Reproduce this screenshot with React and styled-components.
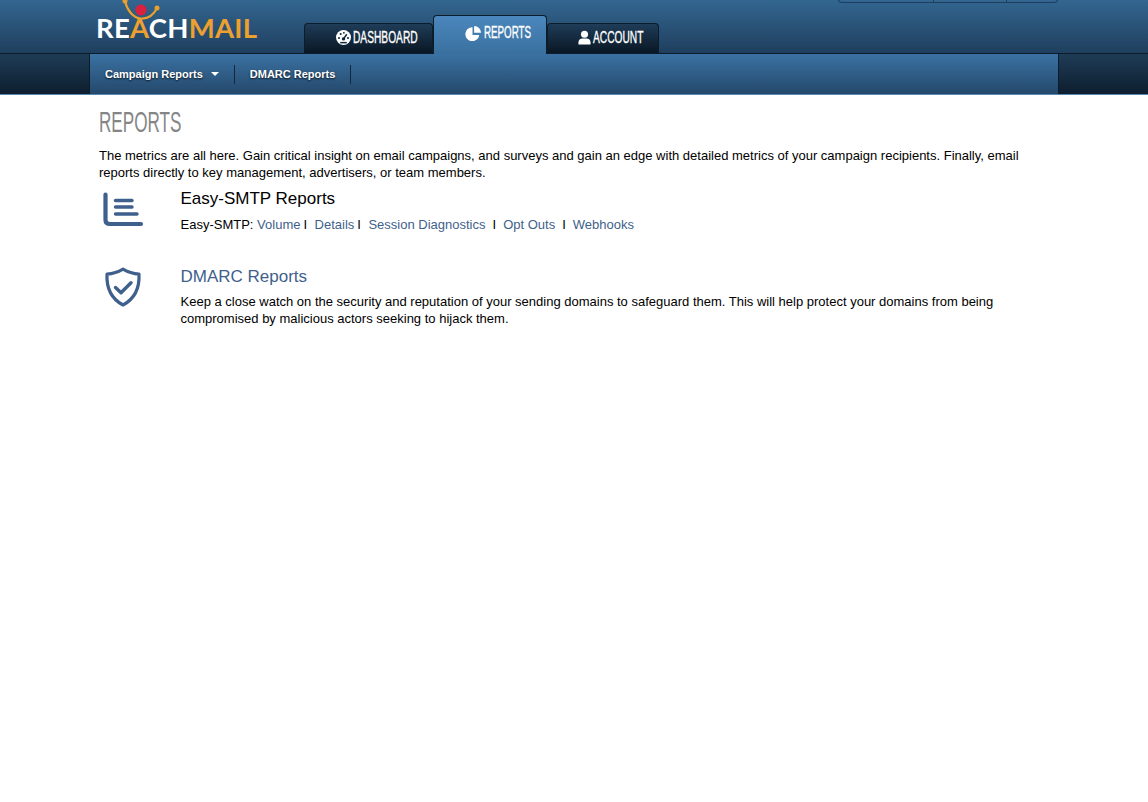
import React from "react"
import styled, { createGlobalStyle } from "styled-components"

const GlobalStyle = createGlobalStyle`
    html, body {
        margin: 0;
        padding: 0;
        background: #fff;
        font-family: "Liberation Sans", Arial, sans-serif;
        color: #000;
    }
`

function DashIcon() {
    return (
        <TabIcon width="15" height="15" viewBox="0 0 16 16">
            <circle cx="8" cy="8" r="8" fill="#fff" />
            <circle cx="8" cy="9.5" r="1.8" fill="#12263a" />
            <path d="M8 9.5 L11.5 4.5" stroke="#12263a" strokeWidth="1.6" />
            <circle cx="3.2" cy="8.5" r="1.1" fill="#12263a" />
            <circle cx="5" cy="4.3" r="1.1" fill="#12263a" />
            <circle cx="8.4" cy="3" r="1" fill="#12263a" />
            <circle cx="12.8" cy="8.5" r="1.1" fill="#12263a" />
            <path d="M4.5 13.5h7" stroke="#12263a" strokeWidth="1.6" />
        </TabIcon>
    )
}

function PieIcon() {
    return (
        <TabIcon width="17" height="15" viewBox="0 0 16 15">
            <path d="M7 1.2 A7 7 0 1 0 13.8 9 L7 9 Z" fill="#fff" />
            <path d="M8.6 0 A7 7 0 0 1 15.6 6.8 L8.6 6.8 Z" fill="#fff" />
        </TabIcon>
    )
}

function UserIcon() {
    return (
        <TabIcon width="13" height="15" viewBox="0 0 14 15">
            <circle cx="7" cy="4" r="3.8" fill="#fff" />
            <path d="M0.5 15 V12.5 C0.5 9.6 3 8.6 4.5 8.6 H9.5 C11 8.6 13.5 9.6 13.5 12.5 V15 Z" fill="#fff" />
        </TabIcon>
    )
}

function ChartIcon() {
    return (
        <svg width="42" height="38" viewBox="0 0 42 38" fill="none" stroke="#3f5f8c" strokeLinecap="round">
            <path d="M3.5 3.5 V29 Q3.5 33 8 33 H39" strokeWidth="4.2" />
            <path d="M13.5 9.5 H30" strokeWidth="3.4" />
            <path d="M13.5 16 H30" strokeWidth="3.4" />
            <path d="M13.5 23 H35" strokeWidth="3.4" />
        </svg>
    )
}

function ShieldIcon() {
    return (
        <svg width="38" height="40" viewBox="0 0 38 40" fill="none" stroke="#3f5f8c" strokeLinecap="round" strokeLinejoin="round">
            <path d="M19 2.2 C24 5.2 29 6.8 35 7.2 C35.6 20 32 31 19 38 C6 31 2.4 20 3 7.2 C9 6.8 14 5.2 19 2.2 Z" strokeWidth="3.2" />
            <path d="M11.5 20.5 L17 25.8 L27 15.8" strokeWidth="3.4" />
        </svg>
    )
}

function App() {
    return (
        <>
            <GlobalStyle />
            <Header>
                <TopButtons>
                    <TopButton $w={96} />
                    <TopButton $w={74} />
                    <TopButton $w={50} />
                </TopButtons>
                <Logo>
                    <LogoMark width="70" height="26" viewBox="0 0 70 26" fill="none">
                        <path d="M9 1 C11 10 17 18 25 18.5 C33 19 38 14 41 8" stroke="#e9a02c" strokeWidth="2.2" />
                        <circle cx="41" cy="8" r="2.5" fill="#e9a02c" />
                        <circle cx="9" cy="1" r="2.5" fill="#e9a02c" />
                        <circle cx="25" cy="10" r="5.6" fill="#d8203f" />
                    </LogoMark>
                    <LogoWhite>RE</LogoWhite><LogoOrange>A</LogoOrange><LogoWhite>CH</LogoWhite><LogoOrange>MAIL</LogoOrange>
                </Logo>
                <Tabs>
                    <Tab $w={129} $pad={31}><DashIcon /><TabLabel $w={65} $scale={0.6}>DASHBOARD</TabLabel></Tab>
                    <ActiveTab><PieIcon /><TabLabel $w={47} $scale={0.575}>REPORTS</TabLabel></ActiveTab>
                    <Tab $w={112} $pad={30}><UserIcon /><TabLabel $w={50} $scale={0.6}>ACCOUNT</TabLabel></Tab>
                </Tabs>
            </Header>
            <SubNav>
                <SideBlock />
                <SubMenu>
                    <SubItem>Campaign Reports<Caret /></SubItem>
                    <SubItem>DMARC Reports</SubItem>
                </SubMenu>
                <SideBlock />
            </SubNav>
            <Content>
                <PageTitle><TitleText>REPORTS</TitleText></PageTitle>
                <Intro>
                    The metrics are all here. Gain critical insight on email campaigns, and surveys and gain an edge with detailed metrics of your campaign recipients. Finally, email reports directly to key management, advertisers, or team members.
                </Intro>
                <Section $h={72}>
                    <IconCell $x={3} $y={2}><ChartIcon /></IconCell>
                    <div>
                        <SectionTitle>Easy-SMTP Reports</SectionTitle>
                        <LinkRow>
                            Easy-SMTP: <SmtpLink>Volume</SmtpLink><Sep $l={3} $r={7.5}>I</Sep>
                            <SmtpLink>Details</SmtpLink><Sep $l={3} $r={7.5}>I</Sep>
                            <SmtpLink>Session Diagnostics</SmtpLink><Sep $l={7} $r={7}>I</Sep>
                            <SmtpLink>Opt Outs</SmtpLink><Sep $l={7} $r={7}>I</Sep>
                            <SmtpLink>Webhooks</SmtpLink>
                        </LinkRow>
                    </div>
                </Section>
                <Section>
                    <IconCell $x={5} $y={0}><ShieldIcon /></IconCell>
                    <div>
                        <SectionTitle $link>DMARC Reports</SectionTitle>
                        <SectionText>
                            Keep a close watch on the security and reputation of your sending domains to safeguard them. This will help protect your domains from being compromised by malicious actors seeking to hijack them.
                        </SectionText>
                    </div>
                </Section>
            </Content>
        </>
    )
}

//styled components

const Header = styled.header`
    position: relative;
    display: flex;
    align-items: flex-end;
    height: 53px;
    padding-left: 96px;
    background: linear-gradient(#336690, #1f3f5e);
    border-bottom: 1px solid #0d1c2b;
`
const TopButtons = styled.div`
    position: absolute;
    top: -1px;
    left: 838px;
    display: flex;
    box-sizing: border-box;
    width: 220px;
    height: 4px;
    border: 1px solid #1c3f60;
    border-top: 0;
    border-radius: 0 0 4px 4px;
`
const TopButton = styled.div`
    box-sizing: border-box;
    width: ${props => props.$w}px;
    border-right: 1px solid #1c3f60;
    &:last-child {
        border-right: 0;
    }
`
const Logo = styled.div`
    position: relative;
    width: 208px;
    align-self: flex-start;
    padding-top: 15px;
    font-family: Lato, "Open Sans", sans-serif;
    font-weight: 700;
    font-size: 27.5px;
    line-height: 26px;
    letter-spacing: 0.25px;
`
const LogoMark = styled.svg`
    position: absolute;
    top: 0;
    left: 20px;
`
const LogoWhite = styled.span`
    position: relative;
    color: #fff;
`
const LogoOrange = styled.span`
    position: relative;
    color: #eda02f;
`
const Tabs = styled.nav`
    display: flex;
    align-items: flex-end;
    margin-bottom: -1px;
`
const TabIcon = styled.svg`
    flex: none;
    margin-right: 2px;
`
const TabLabel = styled.span`
    display: inline-block;
    width: ${props => props.$w}px;
    white-space: nowrap;
    font-size: 17px;
    -webkit-text-stroke: 0.35px #fff;
    transform: scaleX(${props => props.$scale});
    transform-origin: left center;
`
const Tab = styled.div`
    display: flex;
    align-items: center;
    box-sizing: border-box;
    width: ${props => props.$w}px;
    height: 30px;
    margin-bottom: 1px;
    padding: 0 0 2px ${props => props.$pad}px;
    border: 1px solid #0d1c2b;
    border-bottom: 0;
    border-radius: 4px 4px 0 0;
    background: linear-gradient(#1f3c58, #0a1724);
    color: #fff;
`
const ActiveTab = styled.div`
    display: flex;
    align-items: center;
    box-sizing: border-box;
    width: 114px;
    height: 39px;
    padding: 0 0 4px 31px;
    border: 1px solid #0d1c2b;
    border-bottom: 0;
    border-radius: 4px 4px 0 0;
    background: linear-gradient(#4b87bd, #39709f);
    color: #fff;
`
const SubNav = styled.div`
    display: flex;
    height: 40px;
    border-bottom: 1px solid #5b86ad;
`
const SideBlock = styled.div`
    box-sizing: border-box;
    width: 90px;
    background: linear-gradient(#1e3c56, #0d1e2e);
    &:first-child {
        border-right: 1px solid #0d1c2b;
    }
    &:last-child {
        border-left: 1px solid #0d1c2b;
    }
`
const SubMenu = styled.div`
    flex: 1;
    display: flex;
    align-items: center;
    background: linear-gradient(#3b72a3, #24486b);
`
const SubItem = styled.div`
    display: flex;
    align-items: center;
    height: 19px;
    padding: 0 15px;
    border-right: 1px solid #12283d;
    color: #fff;
    font-size: 11px;
    font-weight: 700;
    text-shadow: 0 1px 2px rgba(0, 0, 0, 0.8);
`
const Caret = styled.span`
    margin-left: 8px;
    border-top: 4px solid #fff;
    border-left: 4px solid transparent;
    border-right: 4px solid transparent;
`
const Content = styled.main`
    padding: 11px 128px 0 99px;
`
const PageTitle = styled.h1`
    margin: 0 0 9px;
    color: #858585;
    font-size: 30px;
    font-weight: 400;
    line-height: 32px;
`
const TitleText = styled.span`
    display: inline-block;
    transform: scaleX(0.57);
    transform-origin: left center;
`
const Intro = styled.p`
    margin: 0 0 8px;
    font-size: 13px;
    line-height: 17px;
`
const Section = styled.section`
    display: flex;
    min-height: ${props => props.$h || 0}px;
    margin-bottom: 6px;
`
const IconCell = styled.div`
    flex: 0 0 81.5px;
    padding: ${props => props.$y}px 0 0 ${props => props.$x}px;
    box-sizing: border-box;
`
const SectionTitle = styled.h2`
    margin: 0 0 6px;
    color: ${props => props.$link ? "#3f5f8c" : "#000"};
    font-size: 17px;
    font-weight: 400;
    line-height: 20px;
`
const SectionText = styled.p`
    margin: 0;
    font-size: 13px;
    line-height: 17px;
`
const LinkRow = styled(SectionText)`
    padding-top: 1px;
`
const SmtpLink = styled.a`
    color: #3f5f8c;
`
const Sep = styled.span`
    margin-left: ${props => props.$l}px;
    margin-right: ${props => props.$r}px;
`

export default App
